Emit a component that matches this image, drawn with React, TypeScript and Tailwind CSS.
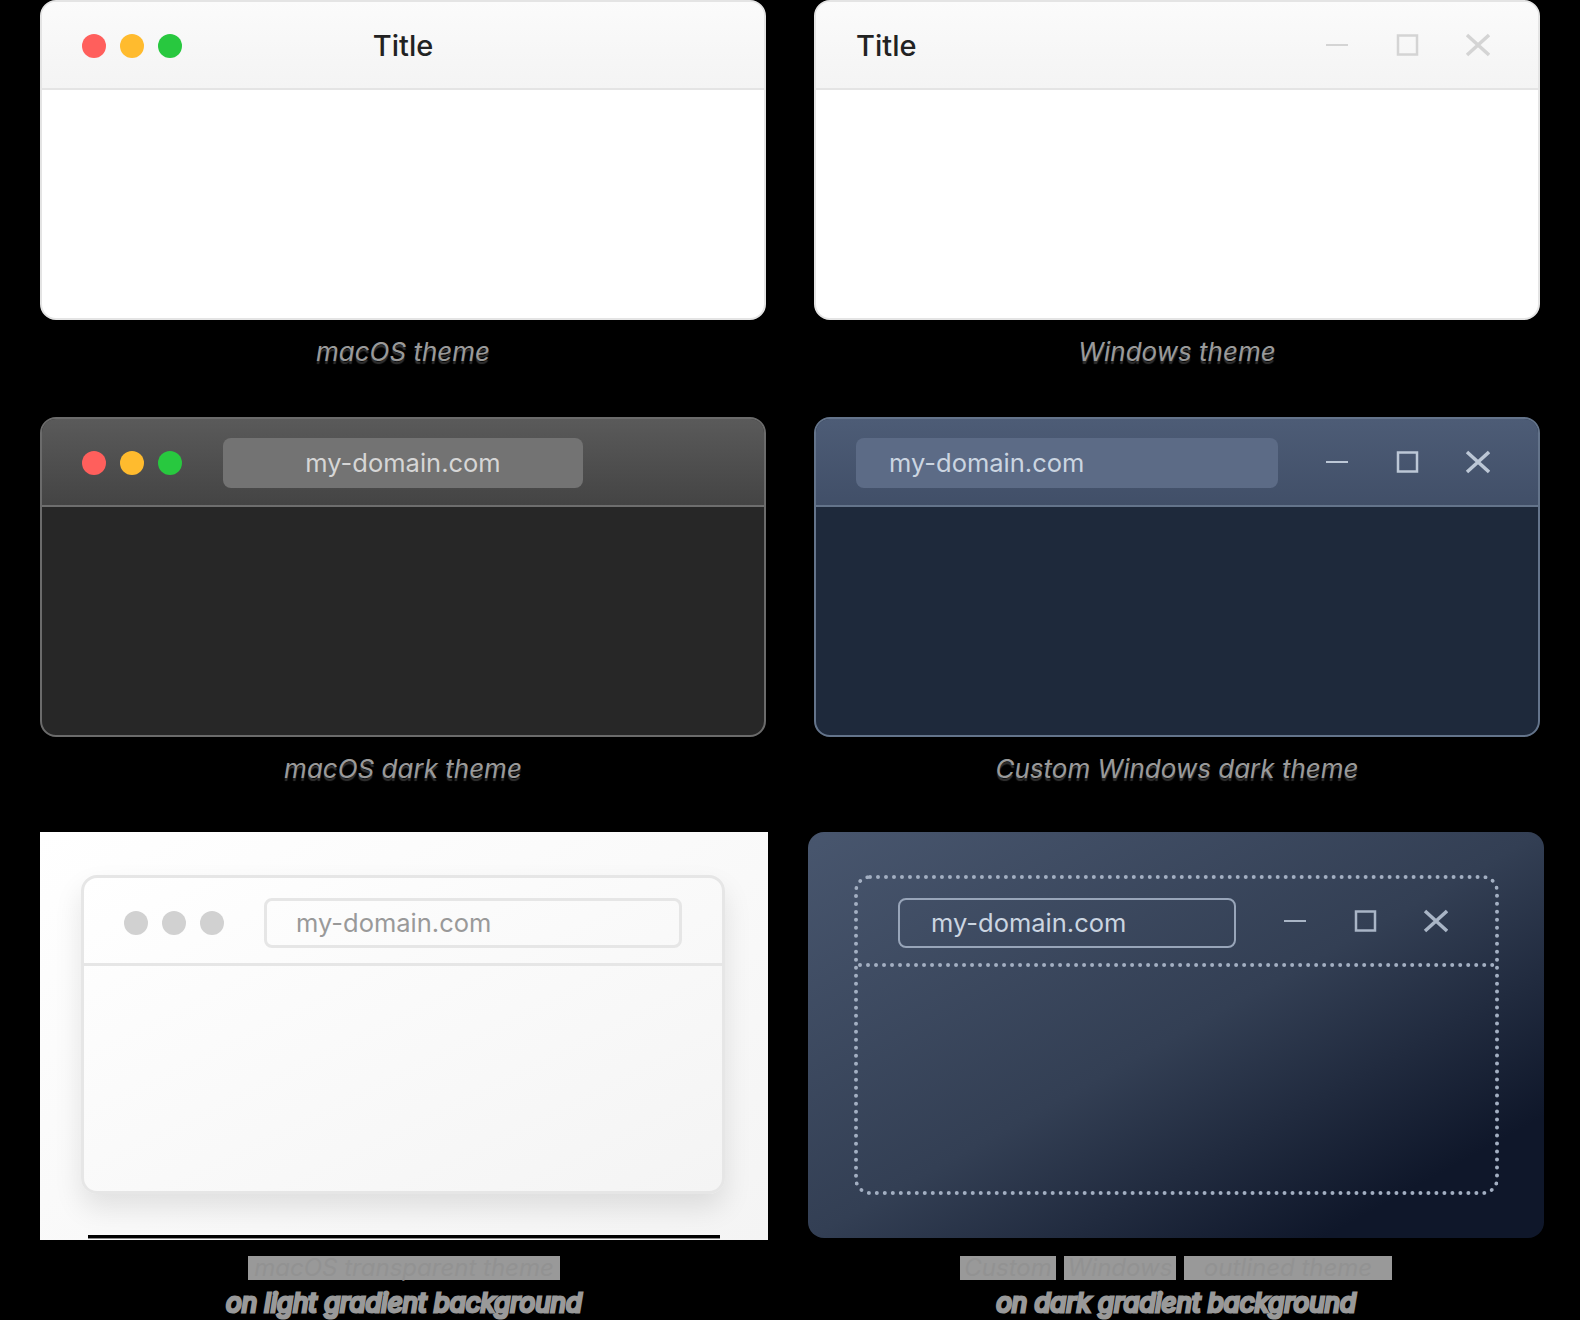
import React from "react";

const font = "font-['Inter','Liberation_Sans',sans-serif]";

function Dots({ gray }: { gray?: boolean }) {
  return (
    <div className="flex gap-[14px] shrink-0">
      <span className={`w-6 h-6 rounded-full ${gray ? "bg-[#d1d1d1]" : "bg-[#ff5f5c]"}`} />
      <span className={`w-6 h-6 rounded-full ${gray ? "bg-[#d1d1d1]" : "bg-[#ffbb2e]"}`} />
      <span className={`w-6 h-6 rounded-full ${gray ? "bg-[#d1d1d1]" : "bg-[#28c83f]"}`} />
    </div>
  );
}

function Controls({ color, className = "" }: { color: string; className?: string }) {
  return (
    <svg width="164" height="24" viewBox="0 0 164 24" fill="none" stroke={color} strokeWidth="2" className={`shrink-0 ${className}`}>
      <path d="M0 12H22" />
      <rect x="72" y="2.5" width="19" height="19" strokeWidth="2.5" />
      <path d="M141 2L163 22M163 2L141 22" strokeWidth="3.5" />
    </svg>
  );
}

function Caption({ children }: { children: React.ReactNode }) {
  return (
    <div className="mt-[14px] h-[36px] text-center text-[26px] leading-[36px] italic text-[#9a9a9a] [text-shadow:0_3px_1px_rgba(90,90,90,0.55)]">
      {children}
    </div>
  );
}

function Blob({ children }: { children: React.ReactNode }) {
  return (
    <span className="block h-[33px] mt-[6px] text-[26px] leading-[33px] italic text-[#999] whitespace-nowrap [-webkit-text-stroke:3px_#999]">
      {children}
    </span>
  );
}

export default function App() {
  return (
    <div className={`${font} w-[1580px] h-[1320px] bg-black overflow-hidden pl-10 flex flex-col`}>
      {/* Row 1 */}
      <div className="grid grid-cols-[726px_726px] gap-x-12 h-[417px]">
        <div>
          <div className="h-[320px] rounded-[16px] border-2 border-[#e4e4e4] bg-white overflow-hidden">
            <div className="relative h-[88px] bg-gradient-to-b from-[#fbfbfb] to-[#f4f4f4] border-b-2 border-[#e4e4e4] flex items-center pl-10 pt-[2px]">
              <Dots />
              <span className="absolute inset-0 pt-[2px] flex items-center justify-center text-[29px] font-medium text-[#222]">Title</span>
            </div>
          </div>
          <Caption>macOS theme</Caption>
        </div>
        <div>
          <div className="h-[320px] rounded-[16px] border-2 border-[#e4e4e4] bg-white overflow-hidden">
            <div className="h-[88px] bg-gradient-to-b from-[#fbfbfb] to-[#f4f4f4] border-b-2 border-[#e4e4e4] flex items-center justify-between pl-10 pr-[48px] pt-[2px]">
              <span className="text-[29px] font-medium text-[#222]">Title</span>
              <Controls color="#d4d4d4" className="mb-[2px]" />
            </div>
          </div>
          <Caption>Windows theme</Caption>
        </div>
      </div>

      {/* Row 2 */}
      <div className="grid grid-cols-[726px_726px] gap-x-12 h-[415px]">
        <div>
          <div className="h-[320px] rounded-[16px] border-2 border-[#6b6b6b] bg-[#272727] overflow-hidden">
            <div className="h-[88px] bg-gradient-to-b from-[#5a5a5a] to-[#444] border-b-2 border-[#6e6e6e] flex items-center pl-10 gap-[41px] pt-[2px]">
              <Dots />
              <div className="w-[360px] h-[50px] rounded-lg bg-[#737373] flex items-center justify-center text-[25.5px] text-[#d6d6d6]">my-domain.com</div>
            </div>
          </div>
          <Caption>macOS dark theme</Caption>
        </div>
        <div>
          <div className="h-[320px] rounded-[16px] border-2 border-[#64748b] bg-[#1e293b] overflow-hidden">
            <div className="h-[88px] bg-gradient-to-b from-[#4d5c76] to-[#414f68] border-b-2 border-[#64748b] flex items-center justify-between pl-10 pr-[48px] pt-[2px]">
              <div className="w-[422px] h-[50px] rounded-lg bg-[#5c6b86] flex items-center pl-[33px] text-[25.5px] text-[#cbd5e1]">my-domain.com</div>
              <Controls color="#bcc7d6" className="mb-[2px]" />
            </div>
          </div>
          <Caption>Custom Windows dark theme</Caption>
        </div>
      </div>

      {/* Row 3 */}
      <div className="grid grid-cols-[728px_736px] gap-x-10">
        <div>
          <div className="relative h-[408px] bg-gradient-to-br from-white to-[#f4f4f4] pt-[43px] pl-[41px]">
            <div className="w-[644px] h-[319px] rounded-[16px] border-[3px] border-[#e6e6e6] bg-gradient-to-br from-white to-[#f4f4f4] shadow-[0_14px_28px_rgba(0,0,0,0.10)] overflow-hidden">
              <div className="h-[88px] border-b-[3px] border-[#e6e6e6] flex items-center pl-10 gap-[40px] pt-[5px]">
                <Dots gray />
                <div className="w-[418px] h-[50px] rounded-lg border-[3px] border-[#e6e6e6] flex items-center pl-[29px] text-[25.5px] text-[#999]">my-domain.com</div>
              </div>
            </div>
            <div className="absolute left-[48px] bottom-[1px] w-[632px] h-[4px] bg-black border-b border-[#888]" />
          </div>
          <div className="mt-[16px] flex flex-col items-center">
            <span className="block w-[312px] h-[24px] leading-[24px] bg-[#999] text-[24px] italic text-[#929292] text-center whitespace-nowrap">macOS transparent theme</span>
            <Blob>on light gradient background</Blob>
          </div>
        </div>
        <div>
          <div className="h-[406px] rounded-[16px] bg-[linear-gradient(to_bottom_right,#48566e_0%,#333f54_50%,#0f172a_85%)] pt-[43px] pl-[46px]">
            <div className="w-[645px] h-[320px] rounded-[16px] border-[4px] border-dotted border-[#a3afc2]">
              <div className="h-[88px] border-b-[4px] border-dotted border-[#a3afc2] flex items-center justify-between pl-10 pr-[47px] pt-[4px]">
                <div className="w-[338px] h-[50px] rounded-lg border-2 border-[#98a5b9] flex items-center pl-[31px] text-[25.5px] text-[#cbd5e1]">my-domain.com</div>
                <Controls color="#a9b5c6" className="mb-[4px]" />
              </div>
            </div>
          </div>
          <div className="mt-[18px] flex flex-col items-center">
            <div className="flex gap-2 text-[24px] italic leading-[24px] text-[#929292] whitespace-nowrap text-center">
              <span className="block w-[96px] h-[24px] bg-[#999]">Custom</span>
              <span className="block w-[112px] h-[24px] bg-[#999]">Windows</span>
              <span className="block w-[208px] h-[24px] bg-[#999]">outlined theme</span>
            </div>
            <Blob>on dark gradient background</Blob>
          </div>
        </div>
      </div>
    </div>
  );
}
